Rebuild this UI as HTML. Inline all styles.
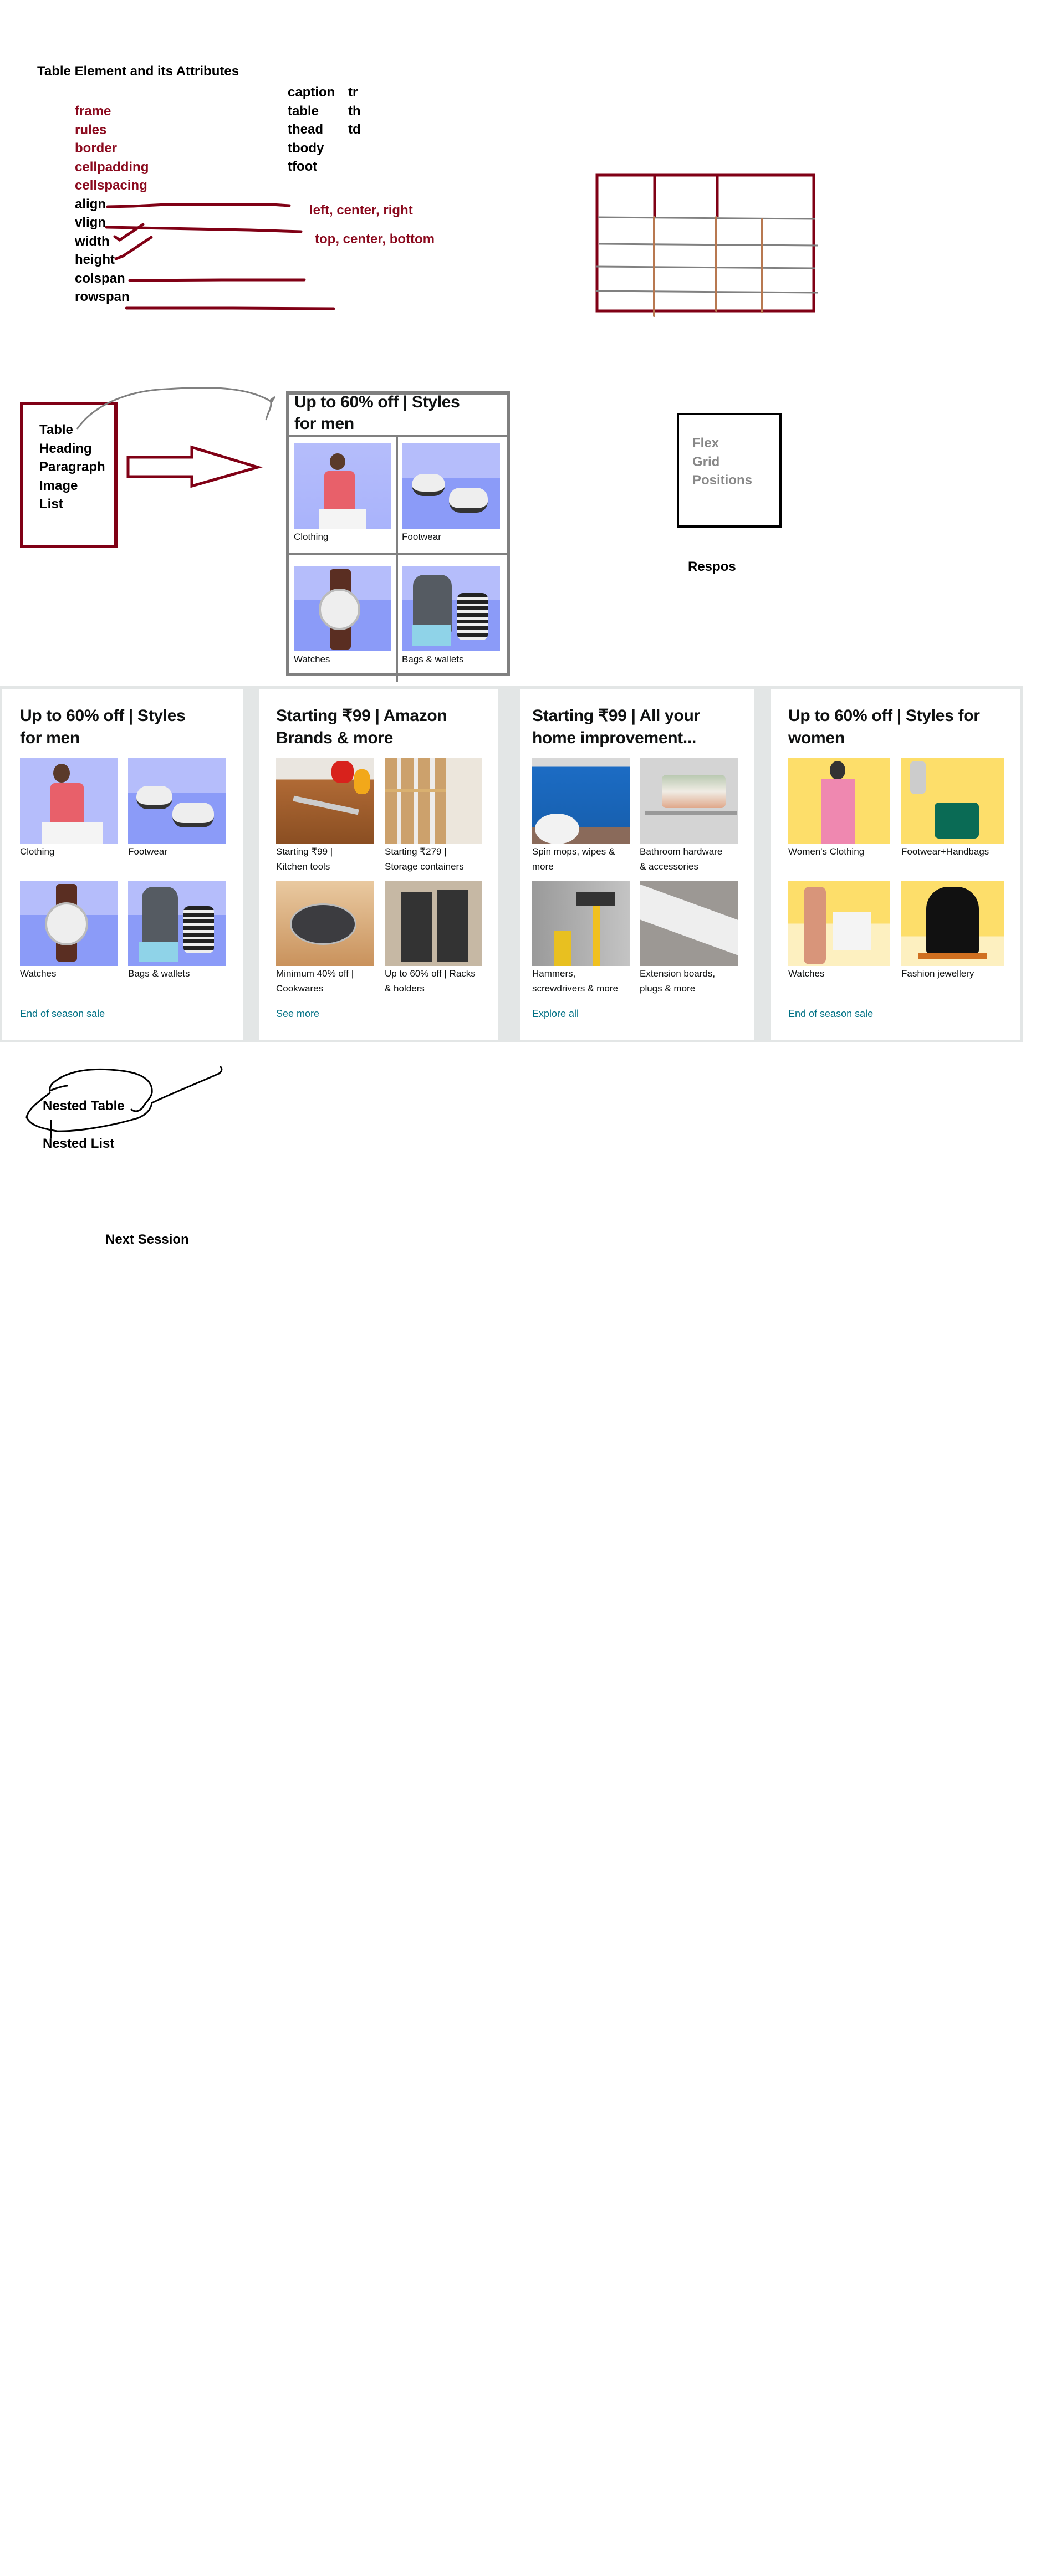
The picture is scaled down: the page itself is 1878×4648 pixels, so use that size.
<!DOCTYPE html>
<html><head><meta charset="utf-8">
<style>
*{margin:0;padding:0;box-sizing:border-box}
body{width:1878px;height:4648px;background:#fff;position:relative;font-family:"Liberation Sans",Arial,sans-serif;overflow:hidden}
.a{position:absolute;white-space:nowrap}
.b{font-weight:bold;font-size:24px;line-height:33.5px;color:#000}
.r{color:#8b0a1e}
.lst{position:absolute;font-weight:bold;font-size:24px;line-height:33.5px}
.card{position:absolute;background:#fff;top:1243px;height:633px}
.h{position:absolute;font-weight:bold;font-size:30px;line-height:40px;color:#0f1111;white-space:nowrap;letter-spacing:-0.3px}
.im{position:absolute;overflow:hidden}
.lb{position:absolute;font-size:17px;line-height:27px;color:#0f1111;white-space:nowrap}
.lk{position:absolute;font-size:18px;color:#007185;white-space:nowrap}
</style></head><body>

<div class="a b" style="left:67px;top:112px">Table Element and its Attributes</div>
<div class="lst" style="left:135px;top:184px">
<div class="r">frame</div><div class="r">rules</div><div class="r">border</div><div class="r">cellpadding</div><div class="r">cellspacing</div>
<div>align</div><div>vlign</div><div>width</div><div>height</div><div>colspan</div><div>rowspan</div></div>
<div class="lst" style="left:519px;top:150px"><div>caption</div><div>table</div><div>thead</div><div>tbody</div><div>tfoot</div></div>
<div class="lst" style="left:628px;top:150px"><div>tr</div><div>th</div><div>td</div></div>
<div class="a b r" style="left:558px;top:363px">left, center, right</div>
<div class="a b r" style="left:568px;top:415px">top, center, bottom</div>

<svg class="a" style="left:0;top:0" width="1878" height="2400" viewBox="0 0 1878 2400" fill="none">
<g stroke="#800015" stroke-width="5" stroke-linecap="round">
<path d="M194 373 L240 372 L300 369 L490 369 L522 371"/>
<path d="M192 410 L300 412 L450 415 L543 418"/>
<path d="M207 427 L216 433 L258 405"/>
<path d="M209 467 L222 462 L273 428"/>
<path d="M234 506 L400 505 L549 505"/>
<path d="M228 556 L420 556 L602 557"/>
</g>
<rect x="1077" y="316" width="391" height="245" stroke="#800015" stroke-width="5"/>
<g stroke="#800015" stroke-width="5"><path d="M1181 316V392M1294 316V392"/></g>
<g stroke="#808080" stroke-width="3"><path d="M1078 392L1470 395M1080 440L1476 443M1076 481L1471 484M1076 525L1475 528"/></g>
<g stroke="#b87850" stroke-width="4" stroke-linecap="round"><path d="M1180 392V570M1292 392V561M1375 396V563"/></g>
<rect x="39" y="728" width="170" height="258" stroke="#800015" stroke-width="6"/>
<path d="M231 825 H346 V807 L465 843 L346 877 V860 H231 Z" stroke="#800015" stroke-width="5"/>
<path d="M139 774 C170 730 230 705 300 702 C390 696 450 700 490 725 L496 716 L488 722 C492 735 482 745 480 758" stroke="#808080" stroke-width="3"/>
<rect x="1223" y="747" width="185" height="203" stroke="#000" stroke-width="4"/>
<rect x="519" y="709" width="398" height="508" stroke="#808080" stroke-width="6"/>
<path d="M519 787H917M519 999H920M716 787V1230" stroke="#808080" stroke-width="4"/>
<g stroke="#000" stroke-width="3" stroke-linecap="round" transform="translate(0,-8)">
<path d="M237 2010 C245 2016 252 2012 257 2007 C262 1998 272 1990 274 1980 C276 1960 260 1945 220 1940 C180 1935 140 1936 110 1952 C100 1958 88 1965 90 1976 C95 1974 110 1968 121 1967 M90 1980 C70 1995 50 2010 48 2024 C55 2040 80 2045 103 2049 C140 2050 200 2040 250 2025 C265 2018 272 2010 274 1998 C300 1985 350 1965 395 1945 C402 1940 400 1935 398 1933"/>
<path d="M92 2030V2061"/>
</g>
<circle cx="287" cy="1263" r="1.5" fill="#000"/>
</svg>

<div class="a" style="left:1249px;top:783px;font-weight:bold;font-size:24px;line-height:33.5px;color:#888">Flex<br>Grid<br>Positions</div>
<div class="a b" style="left:1241px;top:1006px">Respos</div>

<div class="lst" style="left:71px;top:759px">Table<br>Heading<br>Paragraph<br>Image<br>List</div>

<div class="h" style="left:531px;top:706px;line-height:39px">Up to 60% off | Styles<br>for men</div>
<div class="im" style="left:530px;top:800px;width:176px;height:155px;background:linear-gradient(#b5bdfb,#a9b3fb)"><div style="position:absolute;left:65px;top:18px;width:28px;height:30px;border-radius:50%;background:#5a3a2a"></div><div style="position:absolute;left:55px;top:50px;width:55px;height:70px;background:#e8606a;border-radius:8px 8px 0 0"></div><div style="position:absolute;left:45px;top:118px;width:85px;height:40px;background:#f4f4f4"></div></div>
<div class="im" style="left:725px;top:800px;width:177px;height:155px;background:linear-gradient(#b5bdfb 40%,#8b9bf8 40%)"><div style="position:absolute;left:18px;top:55px;width:60px;height:40px;background:#eee;border-radius:20px;border-bottom:8px solid #333"></div><div style="position:absolute;left:85px;top:80px;width:70px;height:45px;background:#eee;border-radius:20px;border-bottom:8px solid #333"></div></div>
<div class="lb" style="left:530px;top:955px">Clothing</div>
<div class="lb" style="left:725px;top:955px">Footwear</div>
<div class="im" style="left:530px;top:1022px;width:176px;height:153px;background:linear-gradient(#b5bdfb 40%,#8b9bf8 40%)"><div style="position:absolute;left:65px;top:5px;width:38px;height:145px;background:#5a2e22;border-radius:6px"></div><div style="position:absolute;left:45px;top:40px;width:75px;height:75px;border-radius:50%;background:#eee;border:4px solid #bbb"></div></div>
<div class="im" style="left:725px;top:1022px;width:177px;height:153px;background:linear-gradient(#b5bdfb 40%,#8b9bf8 40%)"><div style="position:absolute;left:20px;top:15px;width:70px;height:105px;background:#555b62;border-radius:20px 20px 4px 4px"></div><div style="position:absolute;left:18px;top:105px;width:70px;height:38px;background:#8fd3e8"></div><div style="position:absolute;left:100px;top:48px;width:55px;height:85px;background:repeating-linear-gradient(#222 0 7px,#eee 7px 12px);border-radius:10px"></div></div>
<div class="lb" style="left:530px;top:1176px">Watches</div>
<div class="lb" style="left:725px;top:1176px">Bags &amp; wallets</div>

<div class="a" style="left:0;top:1238px;width:1846px;height:642px;background:#e3e6e6"></div>
<div class="card" style="left:4px;width:434px"></div>
<div class="card" style="left:468px;width:431px"></div>
<div class="card" style="left:938px;width:423px"></div>
<div class="card" style="left:1391px;width:450px"></div>

<div class="h" style="left:36px;top:1272px">Up to 60% off | Styles<br>for men</div>
<div class="im" style="left:36px;top:1368px;width:177px;height:155px;background:#b5bdfb"><div style="position:absolute;left:60px;top:10px;width:30px;height:34px;border-radius:50%;background:#5a3a2a"></div><div style="position:absolute;left:55px;top:45px;width:60px;height:70px;background:#e8606a;border-radius:8px 8px 0 0"></div><div style="position:absolute;left:40px;top:115px;width:110px;height:40px;background:#f4f4f4"></div></div>
<div class="im" style="left:231px;top:1368px;width:177px;height:155px;background:linear-gradient(#b5bdfb 40%,#8b9bf8 40%)"><div style="position:absolute;left:15px;top:50px;width:65px;height:42px;background:#eee;border-radius:20px;border-bottom:8px solid #333"></div><div style="position:absolute;left:80px;top:80px;width:75px;height:45px;background:#eee;border-radius:20px;border-bottom:8px solid #333"></div></div>
<div class="lb" style="left:36px;top:1523px">Clothing</div>
<div class="lb" style="left:231px;top:1523px">Footwear</div>
<div class="im" style="left:36px;top:1590px;width:177px;height:153px;background:linear-gradient(#b5bdfb 40%,#8b9bf8 40%)"><div style="position:absolute;left:65px;top:5px;width:38px;height:140px;background:#5a2e22;border-radius:6px"></div><div style="position:absolute;left:45px;top:38px;width:78px;height:78px;border-radius:50%;background:#eee;border:4px solid #bbb"></div></div>
<div class="im" style="left:231px;top:1590px;width:177px;height:153px;background:linear-gradient(#b5bdfb 40%,#8b9bf8 40%)"><div style="position:absolute;left:25px;top:10px;width:65px;height:110px;background:#555b62;border-radius:20px 20px 4px 4px"></div><div style="position:absolute;left:20px;top:110px;width:70px;height:35px;background:#8fd3e8"></div><div style="position:absolute;left:100px;top:45px;width:55px;height:85px;background:repeating-linear-gradient(#222 0 7px,#eee 7px 12px);border-radius:10px"></div></div>
<div class="lb" style="left:36px;top:1743px">Watches</div>
<div class="lb" style="left:231px;top:1743px">Bags &amp; wallets</div>
<div class="lk" style="left:36px;top:1819px">End of season sale</div>

<div class="h" style="left:498px;top:1272px">Starting ₹99 | Amazon<br>Brands &amp; more</div>
<div class="im" style="left:498px;top:1368px;width:176px;height:155px;background:linear-gradient(#eae6e0 25%,#b06a35 25%,#8a4e22)"><div style="position:absolute;left:100px;top:5px;width:40px;height:40px;border-radius:40%;background:#d8221c"></div><div style="position:absolute;left:140px;top:20px;width:30px;height:45px;border-radius:40%;background:#f2a81a"></div><div style="position:absolute;left:30px;top:80px;width:120px;height:10px;background:#ccc;transform:rotate(12deg)"></div></div>
<div class="im" style="left:694px;top:1368px;width:176px;height:155px;background:#ece6dc"><div style="position:absolute;left:0;top:0;width:110px;height:155px;background:repeating-linear-gradient(90deg,#c49050 0 22px,#eee 22px 30px);opacity:.8"></div><div style="position:absolute;left:0;top:55px;width:110px;height:6px;background:#d9b070"></div></div>
<div class="lb" style="left:498px;top:1523px">Starting ₹99 |<br>Kitchen tools</div>
<div class="lb" style="left:694px;top:1523px">Starting ₹279 |<br>Storage containers</div>
<div class="im" style="left:498px;top:1590px;width:176px;height:153px;background:linear-gradient(#e9c9a0,#c9925c)"><div style="position:absolute;left:25px;top:40px;width:120px;height:75px;border-radius:50%;background:#3c3c40;border:3px solid #bbb"></div></div>
<div class="im" style="left:694px;top:1590px;width:176px;height:153px;background:#c6b8a4"><div style="position:absolute;left:30px;top:20px;width:55px;height:125px;background:#333"></div><div style="position:absolute;left:95px;top:15px;width:55px;height:130px;background:#333"></div></div>
<div class="lb" style="left:498px;top:1743px">Minimum 40% off |<br>Cookwares</div>
<div class="lb" style="left:694px;top:1743px">Up to 60% off | Racks<br>&amp; holders</div>
<div class="lk" style="left:498px;top:1819px">See more</div>

<div class="h" style="left:960px;top:1272px">Starting ₹99 | All your<br>home improvement...</div>
<div class="im" style="left:960px;top:1368px;width:177px;height:155px;background:linear-gradient(#d8d8d8 10%,#1c6cc4 10%,#1760b0 80%,#8a6a5a 80%)"><div style="position:absolute;left:5px;top:100px;width:80px;height:55px;border-radius:50%;background:#f2f2f2"></div></div>
<div class="im" style="left:1154px;top:1368px;width:177px;height:155px;background:#d4d4d4"><div style="position:absolute;left:40px;top:30px;width:115px;height:60px;background:linear-gradient(#b8c8b0,#f0ece4,#e0a88a);border-radius:8px"></div><div style="position:absolute;left:10px;top:95px;width:165px;height:8px;background:#999"></div></div>
<div class="lb" style="left:960px;top:1523px">Spin mops, wipes &amp;<br>more</div>
<div class="lb" style="left:1154px;top:1523px">Bathroom hardware<br>&amp; accessories</div>
<div class="im" style="left:960px;top:1590px;width:177px;height:153px;background:linear-gradient(90deg,#9a9a9a,#c4c4c4)"><div style="position:absolute;left:110px;top:25px;width:12px;height:128px;background:#f0c020"></div><div style="position:absolute;left:80px;top:20px;width:70px;height:25px;background:#333"></div><div style="position:absolute;left:40px;top:90px;width:30px;height:63px;background:#e8c020"></div></div>
<div class="im" style="left:1154px;top:1590px;width:177px;height:153px;background:#9c9894"><div style="position:absolute;left:-20px;top:40px;width:220px;height:60px;background:#eee;transform:rotate(20deg)"></div></div>
<div class="lb" style="left:960px;top:1743px">Hammers,<br>screwdrivers &amp; more</div>
<div class="lb" style="left:1154px;top:1743px">Extension boards,<br>plugs &amp; more</div>
<div class="lk" style="left:960px;top:1819px">Explore all</div>

<div class="h" style="left:1422px;top:1272px">Up to 60% off | Styles for<br>women</div>
<div class="im" style="left:1422px;top:1368px;width:184px;height:155px;background:#fdde6a"><div style="position:absolute;left:75px;top:5px;width:28px;height:34px;border-radius:50%;background:#333"></div><div style="position:absolute;left:60px;top:38px;width:60px;height:117px;background:#ef88b0"></div></div>
<div class="im" style="left:1626px;top:1368px;width:185px;height:155px;background:#fdde6a"><div style="position:absolute;left:15px;top:5px;width:30px;height:60px;background:#ccc;border-radius:10px"></div><div style="position:absolute;left:60px;top:80px;width:80px;height:65px;background:#0a6b55;border-radius:8px"></div></div>
<div class="lb" style="left:1422px;top:1523px">Women's Clothing</div>
<div class="lb" style="left:1626px;top:1523px">Footwear+Handbags</div>
<div class="im" style="left:1422px;top:1590px;width:184px;height:153px;background:linear-gradient(#fdde6a 50%,#fdf0c0 50%)"><div style="position:absolute;left:28px;top:10px;width:40px;height:140px;background:#d8957a;border-radius:10px"></div><div style="position:absolute;left:80px;top:55px;width:70px;height:70px;background:#f4f4f4"></div></div>
<div class="im" style="left:1626px;top:1590px;width:185px;height:153px;background:linear-gradient(#fdde6a 65%,#fdf0c0 65%)"><div style="position:absolute;left:45px;top:10px;width:95px;height:120px;background:#111;border-radius:40px 40px 5px 5px"></div><div style="position:absolute;left:30px;top:130px;width:125px;height:10px;background:#d07020"></div></div>
<div class="lb" style="left:1422px;top:1743px">Watches</div>
<div class="lb" style="left:1626px;top:1743px">Fashion jewellery</div>
<div class="lk" style="left:1422px;top:1819px">End of season sale</div>

<div class="a b" style="left:77px;top:1979px">Nested Table</div>
<div class="a b" style="left:77px;top:2047px">Nested List</div>
<div class="a b" style="left:190px;top:2220px">Next Session</div>
</body></html>
